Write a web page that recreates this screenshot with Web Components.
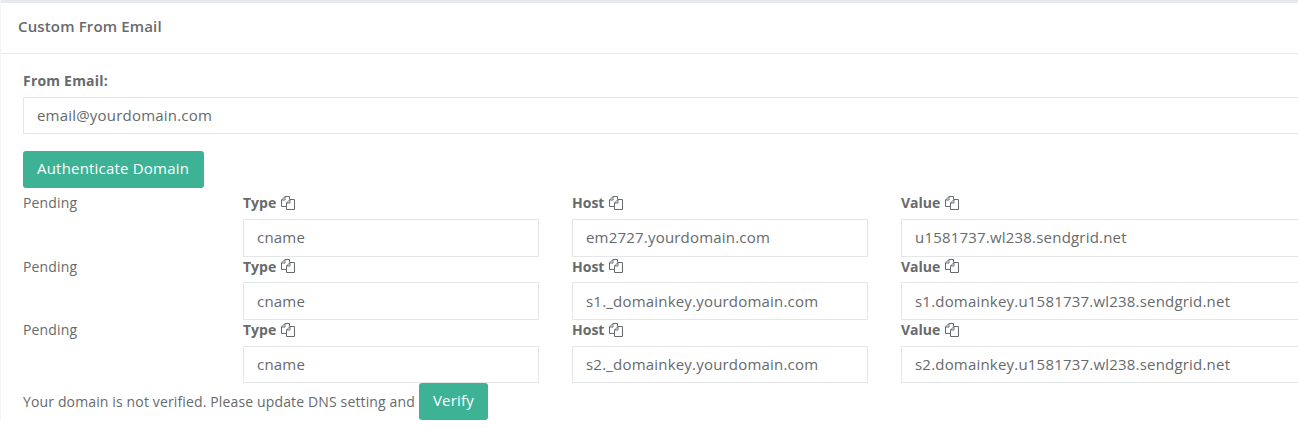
<!DOCTYPE html>
<html>
<head>
<meta charset="utf-8">
<title>Custom From Email</title>
<style>
    html, body { margin: 0; height: 100%; }
    body {
        background: #fff;
        color: #676a6c;
        font-family: "Open Sans", "Liberation Sans", sans-serif;
        font-size: 14px;
        letter-spacing: 0.14px;
        overflow: hidden;
    }
</style>
</head>
<body>
<email-card heading="Custom From Email">
    <text-field label="From Email:" value="email@yourdomain.com"></text-field>
    <green-button class="auth">Authenticate Domain</green-button>
    <dns-row type="cname" host="em2727.yourdomain.com" val="u1581737.wl238.sendgrid.net"></dns-row>
    <dns-row type="cname" host="s1._domainkey.yourdomain.com" val="s1.domainkey.u1581737.wl238.sendgrid.net"></dns-row>
    <dns-row type="cname" host="s2._domainkey.yourdomain.com" val="s2.domainkey.u1581737.wl238.sendgrid.net"></dns-row>
    <verify-line>Your domain is not verified. Please update DNS setting and</verify-line>
</email-card>

<script>
const copyIcon = `<svg width="14" height="14" viewBox="0 0 14 14" fill="none" stroke="currentColor" stroke-width="1">
    <path d="M8.5 3.5V.5H4L.5 4V10.5H5.5"/>
    <path d="M4 .5V4H.5"/>
    <path d="M5.5 13.5V7L9 3.5H13.5V13.5Z"/>
    <path d="M9 3.5V7H5.5"/>
</svg>`;

class EmailCard extends HTMLElement {
    connectedCallback() {
        this.attachShadow({ mode: 'open' });
        this.shadowRoot.innerHTML = `
            <style>
                :host {
                    display: block;
                    margin-left: 1px;
                    border-top: 3px solid #e7eaec;
                    box-shadow: -1px 0 0 #f3f3f4;
                }
                .title {
                    height: 50px;
                    box-sizing: border-box;
                    padding: 13px 17px 0;
                    font-size: 15px;
                    line-height: 20px;
                    font-weight: 600;
                    letter-spacing: 0.15px;
                }
                .content {
                    border-top: 1px solid #e7eaec;
                    padding: 17px 0 0 22px;
                }
            </style>
            <div class="title">${this.getAttribute('heading')}</div>
            <div class="content"><slot></slot></div>
        `;
    }
}

class TextField extends HTMLElement {
    connectedCallback() {
        this.attachShadow({ mode: 'open' });
        this.shadowRoot.innerHTML = `
            <style>
                :host { display: block; margin-right: -40px; }
                label {
                    display: block;
                    font-weight: 700;
                    font-size: 14px;
                    line-height: 20px;
                    margin-bottom: 6px;
                    letter-spacing: 0.2px;
                }
                .input {
                    height: 37px;
                    box-sizing: border-box;
                    border: 1px solid #e5e6e7;
                    padding: 0 13px;
                    font-size: 15px;
                    letter-spacing: 0.2px;
                    line-height: 35px;
                    white-space: nowrap;
                }
            </style>
            <label>${this.getAttribute('label')}</label>
            <div class="input">${this.getAttribute('value')}</div>
        `;
    }
}

class GreenButton extends HTMLElement {
    connectedCallback() {
        this.attachShadow({ mode: 'open' });
        this.shadowRoot.innerHTML = `
            <style>
                :host {
                    display: inline-block;
                    box-sizing: border-box;
                    height: 37px;
                    padding: 0 14px;
                    background: #3eb295;
                    border-radius: 3px;
                    color: #fff;
                    font-size: 15px;
                    letter-spacing: 0.2px;
                    line-height: 35px;
                    white-space: nowrap;
                }
                :host(.auth) { display: block; width: 181px; margin-top: 17px; }
            </style>
            <slot></slot>
        `;
    }
}

class DnsRow extends HTMLElement {
    connectedCallback() {
        this.attachShadow({ mode: 'open' });
        const cell = (name, value) => `
            <div class="cell">
                <div class="head"><b>${name}</b>${copyIcon}</div>
                <div class="input">${value}</div>
            </div>`;
        this.shadowRoot.innerHTML = `
            <style>
                :host {
                    display: grid;
                    grid-template-columns: 187px 296px 296px 1fr;
                    column-gap: 33px;
                    margin-right: -40px;
                    height: 63.4px;
                }
                .status { line-height: 20px; padding-top: 5.37px; }
                .cell { min-width: 0; }
                .head {
                    display: flex;
                    align-items: center;
                    gap: 5px;
                    height: 20px;
                    margin-top: 4.9px;
                    margin-bottom: 6px;
                }
                .head b { font-weight: 700; letter-spacing: 0; }
                .input {
                    height: 37.7px;
                    box-sizing: border-box;
                    border: 1px solid #e5e6e7;
                    padding: 0.4px 13px 0;
                    font-size: 15px;
                    letter-spacing: 0.2px;
                    line-height: 35.3px;
                    white-space: nowrap;
                }
            </style>
            <div class="status">Pending</div>
            ${cell('Type', this.getAttribute('type'))}
            ${cell('Host', this.getAttribute('host'))}
            ${cell('Value', this.getAttribute('val'))}
        `;
    }
}

class VerifyLine extends HTMLElement {
    connectedCallback() {
        this.attachShadow({ mode: 'open' });
        this.shadowRoot.innerHTML = `
            <style>
                :host { display: flex; align-items: center; gap: 4px; margin-top: 5px; }
            </style>
            <slot></slot>
            <green-button>Verify</green-button>
        `;
    }
}

customElements.define('email-card', EmailCard);
customElements.define('text-field', TextField);
customElements.define('green-button', GreenButton);
customElements.define('dns-row', DnsRow);
customElements.define('verify-line', VerifyLine);
</script>
</body>
</html>
